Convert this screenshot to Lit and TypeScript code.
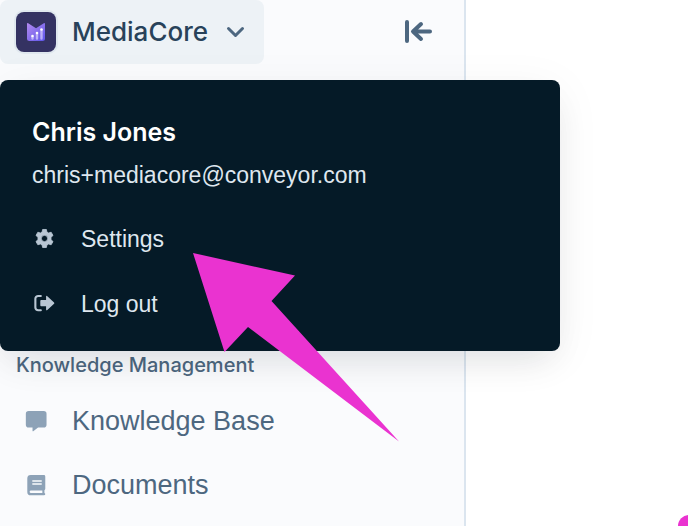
import { LitElement, html, css, svg } from "lit";
import { customElement } from "lit/decorators.js";

const gear = svg`<svg viewBox="0 0 20 20" class="glyph" aria-hidden="true">
  <path fill="currentColor" fill-rule="evenodd" d="M8.200 .4h3.600l.5 2.500 1.600.9 2.400-.8 1.800 3.100-1.900 1.700v2.400l1.900 1.700-1.800 3.100-2.400-.8-1.600.9-.5 2.500H8.200l-.5-2.500-1.600-.9-2.400.8-1.800-3.100 1.900-1.700V7.800L1.900 6.100 3.700 3l2.400.8 1.600-.9zM10 6a3 3 0 1 0 0 6 3 3 0 0 0 0-6z" stroke="currentColor" stroke-width=".8" stroke-linejoin="round" transform="translate(0 1)"/></svg>`;

const logout = svg`<svg viewBox="0 0 20 20" class="glyph" aria-hidden="true">
  <path fill="none" stroke="currentColor" stroke-width="2" stroke-linecap="round" d="M6.500 2.800H4a2.700 2.700 0 0 0-2.700 2.700v8.200A2.700 2.700 0 0 0 4 16.400h2.500"/>
  <path fill="currentColor" d="M6 7.500q0-.8.8-.8H11.500V3.600q0-1.500 1.200-.6l6.400 6q.6.600 0 1.200l-6.400 6q-1.200.9-1.200-.6v-3.100H6.800q-.8 0-.8-.8z"/></svg>`;

const comment = svg`<svg viewBox="0 0 22 22" class="glyph-lg" aria-hidden="true">
  <path fill="currentColor" d="M3.500 1h14.400a2.700 2.700 0 0 1 2.700 2.700v10.400a2.700 2.700 0 0 1-2.700 2.700H12.500l-4.600 3.500q-.7.400-.7-.4v-3.100H3.500A2.700 2.700 0 0 1 .8 14.100V3.700A2.700 2.700 0 0 1 3.500 1z"/></svg>`;

const book = svg`<svg viewBox="0 0 22 22" class="glyph-lg" aria-hidden="true">
  <path fill="currentColor" fill-rule="evenodd" d="M5.500 1h12.500q1.400 0 1.400 1.400v11.800q0 1-.8 1.300v2.600q.8.300.8 1 0 1.300-1.300 1.300H5.500A3.300 3.300 0 0 1 2.200 17.100V4.300A3.300 3.300 0 0 1 5.500 1zM5.700 15.700a1.200 1.200 0 0 0 0 2.500H16.600V15.700zM7 5.900v1.400h9V5.900zM7 8.800v1.400h9V8.800z"/></svg>`;

@customElement("app-root")
export class AppRoot extends LitElement {
  static styles = css`
    :host {
      display: block;
      position: relative;
      min-height: 100vh;
      overflow: hidden;
      background: #fff;
      color: #4d6780;
      font-family: "Liberation Sans", Arial, sans-serif;
    }
    * { box-sizing: border-box; }
    button {
      border: 0;
      background: none;
      padding: 0;
      font: inherit;
      color: inherit;
      text-align: left;
      cursor: pointer;
    }
    a { color: inherit; text-decoration: none; }
    svg { display: block; }
    .page { display: flex; min-height: 100vh; }
    .sidebar {
      flex: 0 0 466px;
      background: #fafbfd;
      border-right: 2px solid #dbe5ef;
    }
    .top {
      display: flex;
      justify-content: space-between;
      align-items: center;
      padding-right: 32px;
    }
    .switcher {
      display: flex;
      align-items: center;
      gap: 16px;
      height: 64px;
      padding: 0 16px;
      border-radius: 8px;
      background: #edf2f6;
      color: #28425a;
      font: 500 26px/32px Inter, "Liberation Sans", sans-serif;
    }
    .logo {
      width: 40px;
      height: 40px;
      border-radius: 8px;
      background: #343262;
      box-shadow: 0 0 0 2px #dfe7ee;
    }
    .chevron { width: 24px; height: 24px; color: #4d6780; }
    .collapse { width: 28px; height: 28px; }
    .nav { padding: 285px 16px 0; }
    h2 {
      margin: 0;
      font: 500 20px/32px Inter, "Liberation Sans", sans-serif;
    }
    ul { list-style: none; margin: 0; padding: 0; }
    .nav ul { padding-top: 8px; }
    .link {
      display: flex;
      align-items: center;
      gap: 24px;
      height: 64px;
      padding-left: 9px;
      font-size: 27px;
      line-height: 32px;
    }
    .glyph-lg { width: 23px; height: 23px; color: #8da2b7; }
    .menu {
      position: absolute;
      top: 80px;
      left: 0;
      width: 560px;
      padding: 32px 32px 15px;
      border-radius: 8px;
      background: #051a27;
      color: #dfe7ef;
      font-size: 23px;
      line-height: 32px;
      box-shadow: 0 8px 48px rgba(7, 27, 40, 0.05), 0 16px 32px -10px rgba(7, 27, 40, 0.1);
    }
    .name {
      margin: 0;
      color: #fff;
      font: 600 25px/40px Inter, "Liberation Sans", sans-serif;
    }
    .email { margin: 0; line-height: 46px; }
    .menu .item {
      display: flex;
      align-items: center;
      gap: 26px;
      width: 100%;
      height: 65px;
      padding-left: 2px;
    }
    .menu ul { padding-top: 8px; }
    .glyph { width: 21px; height: 21px; color: #b9c6d3; }
    .pointer {
      position: absolute;
      top: 252px;
      left: 192px;
      width: 208px;
      height: 190px;
      pointer-events: none;
    }
    .dot {
      position: absolute;
      right: -12px;
      bottom: -11px;
      width: 22px;
      height: 22px;
      border-radius: 50%;
      background: #ea33d0;
    }
  `;

  render() {
    return html`
      <div class="page">
        <aside class="sidebar">
          <div class="top">
            <button class="switcher" aria-expanded="true">
              <svg class="logo" viewBox="0 0 40 40" aria-hidden="true">
                <defs>
                  <linearGradient id="m" x1="0" y1="0" x2="1" y2="1">
                    <stop offset="0" stop-color="#b48af0" />
                    <stop offset="1" stop-color="#5d55ea" />
                  </linearGradient>
                </defs>
                <path fill="url(#m)" d="M11 12q0-1.500 1.200-.8L20 16.200l7.800-5q1.200-.7 1.200.8v14.500q0 2.500-2.500 2.500h-13Q11 29 11 26.500z" />
                <path stroke="#e9e2fd" stroke-opacity=".6" stroke-width="2.400" stroke-linecap="round" d="M16.500 25v1.500M21 22v4.500M25.500 18.500v8" />
                <g fill="#fff"><circle cx="16.500" cy="24" r="1.300" /><circle cx="21" cy="21" r="1.300" /><circle cx="25.500" cy="17.500" r="1.300" /></g>
              </svg>
              <span>MediaCore</span>
              <svg class="chevron" viewBox="0 0 24 24" aria-hidden="true">
                <path fill="none" stroke="currentColor" stroke-width="3" stroke-linecap="round" stroke-linejoin="round" d="M4.500 8.500l7 7 7-7" />
              </svg>
            </button>
            <button class="collapse" aria-label="Collapse sidebar">
              <svg viewBox="0 0 28 28" aria-hidden="true">
                <path fill="none" stroke="currentColor" stroke-width="4" stroke-linecap="round" stroke-linejoin="round" d="M3 4v19M26 13.500H10M17 6l-8 7.500L17 21" />
              </svg>
            </button>
          </div>
          <nav class="nav">
            <h2>Knowledge Management</h2>
            <ul>
              <li><a class="link" href="#knowledge-base">${comment}<span>Knowledge Base</span></a></li>
              <li><a class="link" href="#documents">${book}<span>Documents</span></a></li>
            </ul>
          </nav>
        </aside>
        <main></main>
      </div>
      <section class="menu" aria-label="Account">
        <p class="name">Chris Jones</p>
        <p class="email">chris+mediacore@conveyor.com</p>
        <ul>
          <li><a class="item" href="#settings">${gear}<span>Settings</span></a></li>
          <li><button class="item">${logout}<span>Log out</span></button></li>
        </ul>
      </section>
      <svg class="pointer" viewBox="0 0 208 190" aria-hidden="true">
        <path fill="#ea33d0" d="M1 1l102 22.500L79.500 49 207 189.500 56 75 32.500 100z" />
      </svg>
      <span class="dot"></span>
    `;
  }
}
